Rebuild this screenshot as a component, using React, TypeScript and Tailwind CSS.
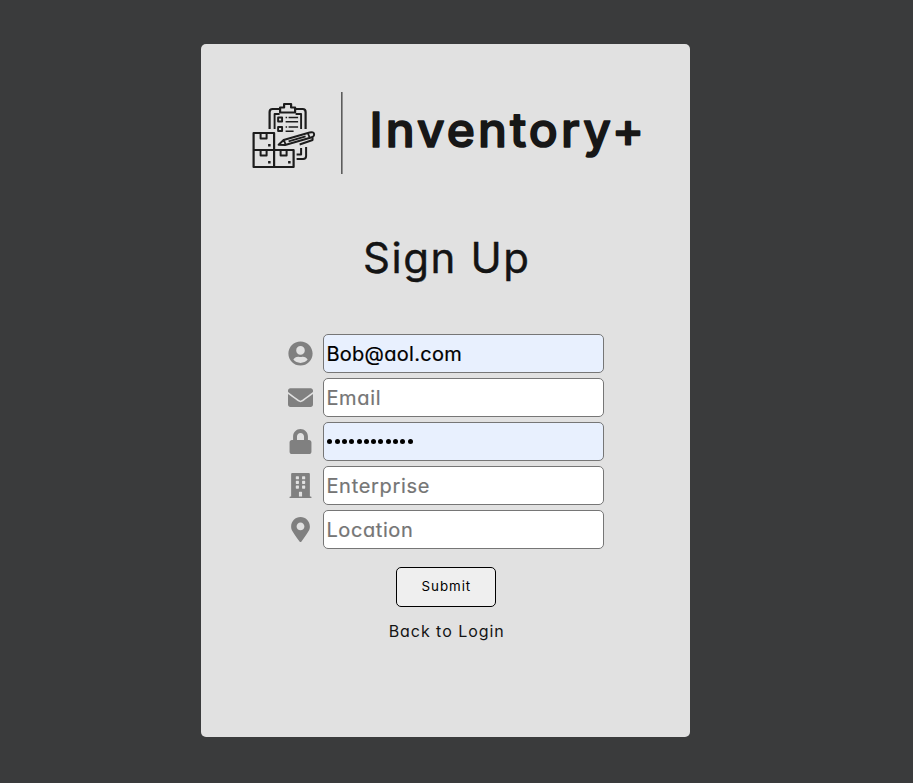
import type { ReactNode } from "react";
import { FaUserCircle, FaEnvelope, FaLock, FaBuilding, FaMapMarkerAlt } from "react-icons/fa";

function Logo() {
  return (
    <svg width="400" height="92" viewBox="248.4 87 400 92" className="block" role="img" aria-label="Inventory+">
      <g fill="none" stroke="#1c1c1c" strokeWidth="2.2" strokeLinejoin="round">
        <path d="M254 133h20.500v34h-20.500zM254 150h40v17h-20M274.500 150v17" />
        <path d="M261 133v5.500h6v-5.500M261 150v5.500h6v-5.500M281 150v5.500h6v-5.500" strokeWidth="2" />
        <path d="M270 129v-17q0-3 3-3h7M296 109h7q3 0 3 3v17" />
        <path d="M280.500 112.500v-5h4v-3.500h7v3.500h4v5z" />
        <path d="M275 129v-15h5M296 114h5.500v15" strokeWidth="1.900" />
        <path d="M278.500 117.500h4v4h-4zM278.500 127h4v4h-4z" strokeWidth="1.900" />
        <path d="M286 117.500h1.500M289 117.500h9.500M286 121.800h12.500M286 127h1.500M289 127h9.500M286 131.300h8" strokeWidth="1.600" />
        <path d="M279 144.800l5-4.800 26-7.500q4-1 4.500 1.500t-3 3.500l-26 7.500zM284 139.500l2 5M308 132.500l2 5M289 141.300l17-4.900M313 137v3l-13 4.500" strokeWidth="1.900" />
        <path d="M306.500 147v9q0 3-3 3H297M301.500 148v6.500h-4.500" strokeWidth="2" />
      </g>
      <path d="M268.500 144h2.500v2.500h-2.500zM268.500 161h2.500v2.500h-2.500zM288.500 161h2.500v2.500h-2.500z" fill="#1c1c1c" />
      <path d="M342.200 92v82" stroke="#5c5c5c" strokeWidth="1.600" />
      <text x="370" y="146.500" textLength="274.500" lengthAdjust="spacing" fontFamily="Inter, sans-serif" fontSize="48" fontWeight="500" fill="#171717" stroke="#171717" strokeWidth="1.600" strokeLinejoin="round">Inventory+</text>
    </svg>
  );
}

function Field({ icon, filled, children }: { icon: ReactNode; filled?: boolean; children: ReactNode }) {
  return (
    <div className="flex h-[39px] items-center">
      <div className="flex w-[25px] justify-center text-[25px] text-[#808080]">{icon}</div>
      <div className={`ml-[10px] flex h-[39px] w-[281px] items-center rounded-[5px] border border-[#767676] pl-[2px] text-xl ${filled ? "bg-[#e8f0fe] text-black" : "bg-white text-[#757575]"}`}>
        {children}
      </div>
    </div>
  );
}

export default function App() {
  return (
    <main className="h-[783px] w-full bg-[#3a3b3c] pt-[44px] pl-[201.4px] font-['Inter',sans-serif] [font-feature-settings:'cv11']">
      <section className="flex h-[693px] w-[489px] flex-col rounded-[5px] bg-[#e1e1e1] pt-[43px] text-[#141414]">
        <div className="pl-[47px]"><Logo /></div>
        <h1 className="mt-[48px] ml-[161.500px] h-[62px] text-[42px] leading-[62px] tracking-[1.6px] whitespace-nowrap [-webkit-text-stroke:0.4px_#141414]">Sign Up</h1>
        <form className="mt-[45px] ml-[87px] flex flex-col gap-[5px]">
          <Field icon={<FaUserCircle />} filled><span className="tracking-[0.3px] [-webkit-text-stroke:0.2px_#000]">Bob@aol.com</span></Field>
          <Field icon={<FaEnvelope />}><span className="tracking-[0.7px] [-webkit-text-stroke:0.2px_#757575]">Email</span></Field>
          <Field icon={<FaLock />} filled>
            <span className="flex gap-[2.3px] pb-px pl-px" aria-label="Password">
              {Array.from({ length: 12 }, (_, i) => <i key={i} className="size-[5px] rounded-full bg-black" />)}
            </span>
          </Field>
          <Field icon={<FaBuilding />}><span className="tracking-[0.7px] [-webkit-text-stroke:0.2px_#757575]">Enterprise</span></Field>
          <Field icon={<FaMapMarkerAlt />}><span className="tracking-[0.6px] [-webkit-text-stroke:0.2px_#757575]">Location</span></Field>
        </form>
        <button className="mt-[18px] ml-[195px] h-10 w-[100px] rounded-[5px] border border-black bg-[#efefef] text-[13.333px] tracking-[0.95px] text-black">Submit</button>
        <a className="mt-[12px] ml-[187.300px] text-base leading-6 tracking-[0.95px] whitespace-nowrap">Back to Login</a>
      </section>
    </main>
  );
}
